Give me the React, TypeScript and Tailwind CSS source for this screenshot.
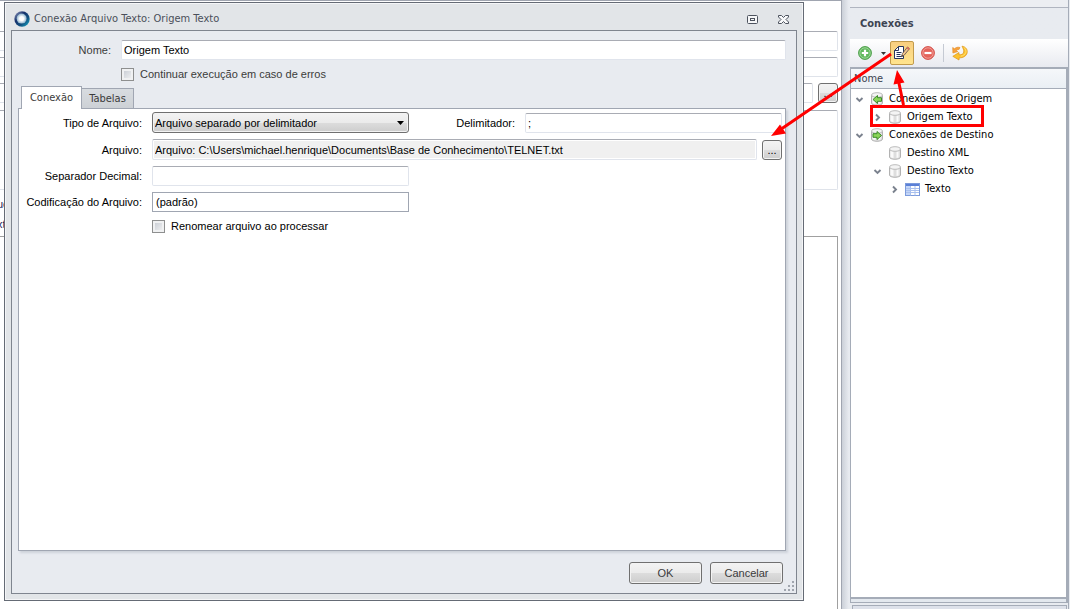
import type { ReactNode } from "react";

const field =
  "h-5 min-w-0 rounded-[2px] border border-[#e0e4ec] border-t-[#a9acb4] bg-white px-[2px] text-[11px] text-black outline-none";
const backField = "h-5 rounded-r-[2px] border border-l-0 border-[#dfe3ea] border-t-[#a9acb4]";
const button =
  "rounded-[3px] border border-[#707070] bg-[linear-gradient(#f3f3f3,#ebebeb_50%,#dddddd_50%,#cdcdcd)] shadow-[inset_0_0_0_1px_#f3f3f3]";

function CheckBox({ id, label }: { id: string; label: string }) {
  return (
    <div className="flex items-center gap-[6px]">
      <input
        id={id}
        type="checkbox"
        className="h-[13px] w-[13px] appearance-none border border-[#8e8f8f] bg-linear-to-br from-[#c3c8d0] to-[#f6f6f6] shadow-[inset_0_0_0_2px_#f0f1f2] checked:bg-[#4a6a9a]"
      />
      <label htmlFor={id}>{label}</label>
    </div>
  );
}

function Chevron({ open }: { open?: boolean }) {
  return (
    <svg viewBox="0 0 9 9" className="h-[9px] w-[9px]" fill="none" stroke="#7b828e" strokeWidth="1.9">
      {open ? <path d="M1.5 3l3 3 3-3" /> : <path d="M3 1.5l3 3-3 3" />}
    </svg>
  );
}

function Database({ arrow }: { arrow?: "in" | "out" }) {
  return (
    <svg viewBox="0 0 14 14" className="h-[14px] w-[14px]">
      <path d="M1.5 3v8c0 1.3 2.5 2.3 5.5 2.3s5.5-1 5.5-2.300V3" fill="#dedede" stroke="#b2b2b2" />
      <path d="M2.500 4.500v6.800l3 1V5.500zM8.500 5.500v6.500l2-.6V5z" fill="#fafafa" />
      <ellipse cx="7" cy="3" rx="5.500" ry="2.300" fill="#f4f4f4" stroke="#bcbcbc" />
      {arrow === "in" && <path d="M3 7.500l4.500-4v2.200h4v3.600h-4v2.200z" fill="#8bd659" stroke="#3c8a2a" />}
      {arrow === "out" && <path d="M11.500 7.500l-4.500-4v2.200H3v3.600h4v2.200z" fill="#8bd659" stroke="#3c8a2a" />}
    </svg>
  );
}

function TableIcon() {
  return (
    <svg viewBox="0 0 15 13" className="h-[13px] w-[15px]">
      <rect x=".5" y=".5" width="14" height="12" fill="#fff" stroke="#7c9bdc" />
      <path d="M1 1h13v2H1z" fill="#5b80d6" />
      <path d="M1 3h4v9H1z" fill="#c3d5f7" />
      <path d="M1 5.500h13M1 7.500h13M1 9.500h13M5.500 3v9.500M10 3v9.500" stroke="#a9c0ee" />
    </svg>
  );
}

function TreeRow({ indent, open, leaf, icon, label }: { indent: string; open?: boolean; leaf?: boolean; icon: ReactNode; label: string }) {
  return (
    <li className={`flex h-[18px] items-center ${indent}`}>
      <span className="w-[15px]">{!leaf && <Chevron open={open} />}</span>
      {icon}
      <span className="pl-[5px]">{label}</span>
    </li>
  );
}

function Workspace() {
  return (
    <main className="flex min-w-0 flex-1 flex-col border-t border-r border-[#a0a5b0] bg-white pt-[30px] pr-[3px] text-[11px]">
      <div className={backField} />
      <div className={`mt-[6px] ${backField}`} />
      <div className="mt-[6px] flex gap-[5px]">
        <div className={`flex-1 ${backField}`} />
        <button className={`h-5 w-5 leading-[19px] ${button}`}>...</button>
      </div>
      <div className="mt-[7px] h-20 rounded-r-[2px] border border-l-0 border-[#dfe3ea] border-t-[#a9acb4]" />
      <div className="mt-1 -ml-[3px] leading-5 text-[#1c1c5a]">
        <p>uc</p>
        <p>xt</p>
      </div>
      <div className="mt-[2px] flex-1 border border-x-0 border-b-0 border-[#a0a0a0] border-r border-r-[#a0a0a0]" />
    </main>
  );
}

function ConnectionDialog() {
  return (
    <section
      role="dialog"
      aria-label="Conexão Arquivo Texto"
      className="absolute top-[2px] right-[266px] bottom-2 left-1 flex flex-col border border-[#656b75] bg-[#e2e5e8] px-[6px] pb-[6px] text-[#3b3b3b] shadow-[inset_0_0_0_1px_#f4f5f7]"
    >
      <header className='flex h-[27px] shrink-0 items-center gap-1 px-[3px] pt-[5px] font-["DejaVu_Sans_Condensed",sans-serif] text-[11px] text-[#4a4f5a]'>
        <svg viewBox="0 0 16 16" className="h-4 w-4">
          <defs>
            <linearGradient id="ring" x2="1" y2="1">
              <stop offset="0" stopColor="#a9b2cf" />
              <stop offset=".35" stopColor="#17306b" />
              <stop offset=".65" stopColor="#12507f" />
              <stop offset="1" stopColor="#16b5cf" />
            </linearGradient>
            <radialGradient id="core">
              <stop offset=".4" stopColor="#fff" />
              <stop offset="1" stopColor="#8fb4cc" />
            </radialGradient>
          </defs>
          <circle cx="8" cy="8" r="7.700" fill="url(#ring)" />
          <circle cx="7.600" cy="7.600" r="5" fill="url(#core)" />
        </svg>
        <h1 className="flex-1">Conexão Arquivo Texto: Origem Texto</h1>
        <button aria-label="Maximizar" className="mr-4">
          <svg viewBox="0 0 11 9" className="h-[9px] w-[11px]" fill="none" stroke="#4d535e">
            <rect x=".5" y=".5" width="10" height="8" rx="1" fill="#f6f7f8" />
            <rect x="3.500" y="3.500" width="4" height="2" />
          </svg>
        </button>
        <button aria-label="Fechar" className="mr-[5px]">
          <svg viewBox="0 0 11 9" className="h-[9px] w-[11px]" fill="#f8f9fa" stroke="#4d535e">
            <path d="M.5.5h3l2 2 2-2h3v1.500L8 4.500 10.500 7v1.500h-3l-2-2-2 2h-3V7L3 4.500.500 2z" />
          </svg>
        </button>
      </header>

      <form className="relative flex flex-1 flex-col border border-[#7f858f] bg-[#e8ebf0] pt-[9px] pr-[10px] pb-[9px] pl-[6px]">
        <div className="flex items-center gap-[10px]">
          <label htmlFor="nome" className="w-[93px] text-right">Nome:</label>
          <input id="nome" defaultValue="Origem Texto" className={`${field} flex-1`} />
        </div>
        <div className="mt-[6px] pl-[103px]">
          <CheckBox id="continuar" label="Continuar execução em caso de erros" />
        </div>

        <div role="tablist" className='relative z-10 mt-1 -mb-px flex items-end pl-[3px] font-["DejaVu_Sans_Condensed",sans-serif] text-[11px]'>
          <button type="button" role="tab" aria-selected="true" className="h-[23px] w-[61px] border border-b-0 border-[#a0a6b2] bg-white">
            Conexão
          </button>
          <button type="button" role="tab" aria-selected="false" className="h-[21px] w-[52px] border border-l-0 border-[#a0a6b2] bg-linear-to-b from-[#d8dce0] to-[#cdd1d6]">
            Tabelas
          </button>
        </div>
        <div className="flex-1 border border-[#a0a6b2] bg-white pt-[3px] pr-[3px] text-black shadow-[2px_2px_2px_#cdd2da]">
          <div className="grid grid-cols-[123px_1fr] items-center gap-x-[10px] gap-y-[6px]">
            <label htmlFor="tipo" className="text-right">Tipo de Arquivo:</label>
            <div className="flex items-center">
              <div className="relative w-[257px]">
                <select id="tipo" className={`block h-[21px] w-full appearance-none pl-[2px] text-[11px] text-black ${button}`}>
                  <option>Arquivo separado por delimitador</option>
                </select>
                <svg viewBox="0 0 7 4" className="pointer-events-none absolute top-[9px] right-[5px] h-1 w-[7px]">
                  <path d="M0 0h7L3.500 4z" />
                </svg>
              </div>
              <label htmlFor="delimitador" className="mr-[10px] w-[106px] text-right">Delimitador:</label>
              <input id="delimitador" defaultValue=";" className={`${field} flex-1`} />
            </div>

            <label htmlFor="arquivo" className="text-right">Arquivo:</label>
            <div className="flex items-center gap-[5px]">
              <input
                id="arquivo"
                readOnly
                defaultValue="Arquivo: C:\Users\michael.henrique\Documents\Base de Conhecimento\TELNET.txt"
                className="h-[21px] min-w-0 flex-1 rounded-[2px] border border-[#e0e4ec] border-t-[#a9acb4] bg-[#f0f0f0] px-[2px] text-[11px] shadow-[inset_0_0_0_1px_#fff] outline-none"
              />
              <button type="button" className={`h-5 w-5 leading-[19px] ${button}`}>...</button>
            </div>

            <label htmlFor="separador" className="text-right">Separador Decimal:</label>
            <input id="separador" className={`${field} w-[257px]`} />

            <label htmlFor="codificacao" className="text-right">Codificação do Arquivo:</label>
            <input id="codificacao" defaultValue="(padrão)" className="h-5 w-[257px] border border-[#a0a6b2] px-[3px] text-[11px] outline-none" />

            <div className="col-start-2">
              <CheckBox id="renomear" label="Renomear arquivo ao processar" />
            </div>
          </div>
        </div>

        <footer className="mt-[11px] flex justify-end gap-2 pr-[3px]">
          <button type="button" className={`h-[22px] w-[73px] ${button}`}>OK</button>
          <button type="button" className={`h-[22px] w-[73px] ${button}`}>Cancelar</button>
        </footer>
        <svg viewBox="0 0 11 11" className="absolute right-px bottom-px h-[11px] w-[11px]" fill="#a0a5ae">
          <path d="M8 0h2v2H8zM4 4h2v2H4zM8 4h2v2H8zM0 8h2v2H0zM4 8h2v2H4zM8 8h2v2H8z" />
        </svg>
      </form>
    </section>
  );
}

function ToolBar() {
  return (
    <div className="flex h-[28px] items-center bg-linear-to-b from-white to-[#e8eaf0] pl-2">
      <button aria-label="Adicionar" className="flex items-center">
        <svg viewBox="0 0 14 14" className="h-[14px] w-[14px]">
          <circle cx="7" cy="7" r="6.400" fill="#62b95f" stroke="#4c9e49" />
          <circle cx="7" cy="7" r="5.200" fill="none" stroke="#a9dca5" strokeWidth=".8" />
          <path d="M7 3.800v6.400M3.800 7h6.400" stroke="#fff" strokeWidth="2.200" />
        </svg>
        <svg viewBox="0 0 5 3" className="ml-[9px] h-[3px] w-[5px]">
          <path d="M0 0h5L2.500 3z" fill="#333" />
        </svg>
      </button>
      <button aria-label="Editar" className="ml-1 flex h-6 w-6 items-center justify-center rounded-[2px] border border-[#c29b4c] bg-linear-to-b from-[#f9cf80] to-[#ffe48d]">
        <svg viewBox="0 0 16 16" className="h-4 w-4">
          <path d="M.5 5.500l4-4h5v12h-9z" fill="#fff" stroke="#27355e" />
          <path d="M4.500 1.500v4h-4M2.500 7.500h5M2.500 9.500h4M2.500 11.500h5" fill="none" stroke="#27355e" />
          <path d="M7.500 11.700l.8-3L13.500 2l2 1.700-5.300 6.500z" fill="#f3c58c" stroke="#5a4a4a" strokeWidth=".8" />
          <path d="M12.500 3.200l1.200-1.500 2 1.700-1.200 1.500z" fill="#d9705c" />
          <path d="M7.500 11.700l.5-1.800 1.200 1z" fill="#222" />
        </svg>
      </button>
      <button aria-label="Remover" className="ml-[7px]">
        <svg viewBox="0 0 14 14" className="h-[14px] w-[14px]">
          <circle cx="7" cy="7" r="6.400" fill="#e4635b" stroke="#d4524c" />
          <circle cx="7" cy="7" r="5.200" fill="none" stroke="#f3aaa3" strokeWidth=".8" />
          <path d="M3.500 7h7" stroke="#fff" strokeWidth="2.200" />
        </svg>
      </button>
      <span className="mx-2 h-[18px] w-px bg-[#c5cad3]" />
      <button aria-label="Atualizar">
        <svg viewBox="0 0 16 16" className="h-4 w-4" strokeLinejoin="round">
          <path d="M.7 2.500l1.800 1.200C4 2.300 6 1.800 8 2.500L7 4.500C6 4.300 5 4.700 4.500 5.400l1.300 1.200L.9 8z" fill="#f7a13c" stroke="#e08a22" strokeWidth=".6" />
          <path d="M10 1.200c3.600.4 5.700 3.300 5.200 6.300-.6 3.500-4 5.500-8 5.300L7 15 .8 11.300 7 7.500v2.200c2.500.3 4.400-.6 4.700-2.700.3-1.900-.7-3.800-1.700-5.800z" fill="#fcc22e" stroke="#dc9417" strokeWidth=".7" />
          <path d="M11.800 2.500c1.800 1.400 2.600 3.200 2 5-.6 1.900-2.500 3.300-5 3.700" fill="none" stroke="#ffe27a" strokeWidth=".9" />
        </svg>
      </button>
    </div>
  );
}

function ConnectionsPanel() {
  return (
    <aside className='flex w-[228px] flex-col bg-linear-to-r from-[#cbd0d8] to-[#e8ebf0] to-3% pr-px pl-2 font-["DejaVu_Sans_Condensed",sans-serif] text-[11px]'>
      <div className="flex flex-1 flex-col border-r border-[#a5acb8] pb-[6px]">
        <div className="h-2 border-b border-[#b0b5c0] bg-[#eceef2]" />
        <h2 className="h-[31px] pl-[10px] leading-[32px] font-bold text-[#3d4452]">Conexões</h2>
        <ToolBar />
        <div className="flex flex-1 flex-col border-t-2 border-r-2 border-b border-l border-[#a5acb8] bg-white">
          <div className="h-5 border-b border-[#a5acb8] bg-linear-to-b from-[#f5f7fa] to-[#eaeff4] pl-[3px] leading-[19px] text-[#3d4452]">Nome</div>
          <ul className="flex-1 pt-px">
            <TreeRow indent="pl-1" open icon={<Database arrow="in" />} label="Conexões de Origem" />
            <TreeRow indent="pl-[22px]" icon={<Database />} label="Origem Texto" />
            <TreeRow indent="pl-1" open icon={<Database arrow="out" />} label="Conexões de Destino" />
            <TreeRow indent="pl-[22px]" leaf icon={<Database />} label="Destino XML" />
            <TreeRow indent="pl-[22px]" open icon={<Database />} label="Destino Texto" />
            <TreeRow indent="pl-[39px]" icon={<TableIcon />} label="Texto" />
          </ul>
          <div className="h-[5px] border-t-2 border-[#a5acb8] bg-[#e3e8ee]" />
        </div>
      </div>
      <div className="mx-[2px] -mt-1 h-1 border border-b-0 border-[#a5acb8] bg-[#dde1ea]" />
    </aside>
  );
}

function Highlights() {
  return (
    <svg viewBox="760 0 310 140" className="pointer-events-none absolute top-0 right-0 h-[140px] w-[310px]" stroke="#f00" strokeWidth="3" fill="none">
      <rect x="871.500" y="106.500" width="111" height="19" />
      <path d="M891 54L782 128.500M903.500 105L898.500 81" />
      <path d="M771 136l9-11.500 6 9zM897 70l7.500 12.500-11 2z" fill="#f00" stroke="none" />
    </svg>
  );
}

export default function App() {
  return (
    <div className='relative flex h-screen overflow-hidden bg-[#e8ebf0] font-["Liberation_Sans",sans-serif] text-[11px] leading-4'>
      <Workspace />
      <ConnectionsPanel />
      <ConnectionDialog />
      <Highlights />
    </div>
  );
}
